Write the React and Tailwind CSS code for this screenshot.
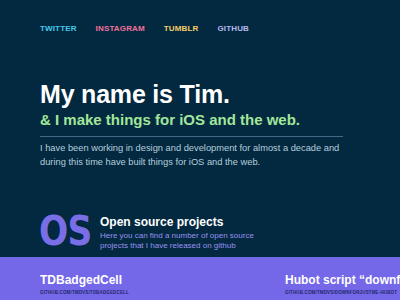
import React from 'react';

const links = [
  { label: 'TWITTER', color: 'text-[#45c9ee]' },
  { label: 'INSTAGRAM', color: 'text-[#f0729c]' },
  { label: 'TUMBLR', color: 'text-[#f5cf68]' },
  { label: 'GITHUB', color: 'text-[#b7b8f0]' },
];

const projects = [
  { name: 'TDBadgedCell', url: 'github.com/tmdvs/TDBadgedCell' },
  { name: 'Hubot script \u201cdownforjustme\u201d', url: 'github.com/tmdvs/downforjustme-hubot' },
];

export default function App() {
  return (
    <div className="w-[400px] h-[300px] overflow-hidden bg-[#02293f] flex flex-col font-['Liberation_Sans',Arial,sans-serif]">

      {/* Nav */}
      <nav className="pt-[25px] pl-[40px] flex gap-[19px]">
        {links.map((l) => (
          <span key={l.label} className={`text-[8px] leading-[8px] font-bold tracking-[0.15px] ${l.color}`}>
            {l.label}
          </span>
        ))}
      </nav>

      {/* Intro */}
      <div className="pl-[40px] mt-[49px]">
        <h1 className="text-[25px] leading-[25px] font-bold text-white tracking-[-0.2px]">
          My name is Tim.
        </h1>
        <h2 className="mt-[5px] text-[15px] leading-[15px] font-bold text-[#a3e69b]">
          &amp; I make things for iOS and the web.
        </h2>
        <div className="mt-[9px] w-[303px] h-px bg-[#3f6b89]" />
        <p className="mt-[4px] text-[9.3px] leading-[14px] text-[#b6cede] whitespace-nowrap">
          I have been working in design and development for almost a decade and
          <br />
          during this time have built things for iOS and the web.
        </p>
      </div>

      {/* Open source */}
      <div className="pl-[39px] mt-[42px] flex items-start">
        <div className="w-[61px] shrink-0">
          <span className="inline-block origin-left scale-x-[0.84] text-[41px] leading-[41px] font-bold text-[#7a6ee6] font-['DejaVu_Sans',sans-serif] tracking-[-1px]">
            OS
          </span>
        </div>
        <div className="mt-[5px]">
          <h3 className="text-[12px] leading-[12px] font-bold text-white">
            Open source projects
          </h3>
          <p className="mt-[3px] text-[8px] leading-[10px] text-[#9b91f0]">
            Here you can find a number of open source
            <br />
            projects that I have released on github
          </p>
        </div>
      </div>

      {/* Project band */}
      <div className="mt-auto h-[43px] bg-[#7467e8] border-t border-[#6d6ae6] pl-[40px] flex overflow-hidden">
        {projects.map((p) => (
          <div key={p.name} className="w-[245px] shrink-0 pt-[16px] whitespace-nowrap">
            <div className="text-[12px] leading-[12px] font-bold text-white">{p.name}</div>
            <div className="mt-[5px] text-[4.5px] leading-[4.5px] font-bold uppercase tracking-[0.15px] text-[#23296a]">
              {p.url}
            </div>
          </div>
        ))}
      </div>
    </div>
  );
}
